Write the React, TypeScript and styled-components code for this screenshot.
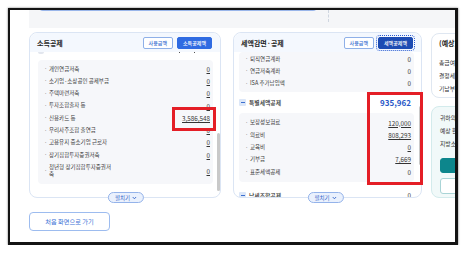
import React from "react";
import styled, { createGlobalStyle } from "styled-components";

const GlobalStyle = createGlobalStyle`
  html, body { margin: 0; padding: 0; background: #fff; }
  body { font-family: "Noto Sans CJK KR", "Noto Sans", sans-serif; }
  * { box-sizing: border-box; }
`;

const Frame = styled.div`
  position: relative;
  margin: 8px 0 0 8px;
  width: 450px;
  height: 237px;
  border: 2px solid #141414;
  border-right-width: 3px;
  border-bottom-width: 3px;
  box-shadow: 0 0 2px rgba(0, 0, 0, 0.55);
  overflow: hidden;
  background: #fff;
`;

const TopStrip = styled.div`
  display: flex;
  align-items: flex-start;
  margin-left: 19px;
  height: 18px;
  background: #f5f6f8;
`;

const TopBox = styled.div`
  margin: -4px 0 0 9px;
  width: 280px;
  height: 5px;
  background: #fff;
  border: 1px solid #9ab6ea;
  border-radius: 0 0 6px 6px;
`;

const DashedDivider = styled.div`
  margin-left: 10px;
  height: 12px;
  border-left: 1px dashed #cfd6e0;
`;

const CardsRow = styled.div`
  display: flex;
  align-items: flex-start;
  margin: 4px 0 0 19px;
`;

const Card = styled.div<{ $w: number; $mr: number }>`
  position: relative;
  display: flex;
  flex-direction: column;
  flex: none;
  width: ${(p) => p.$w}px;
  height: 166px;
  margin-right: ${(p) => p.$mr}px;
  border: 1px solid #dbe5f4;
  border-radius: 8px;
  background: #fff;
`;

const CardHeader = styled.div`
  display: flex;
  align-items: center;
  justify-content: space-between;
  height: 19px;
  padding: 0 8px 0 7px;
  background: #f4f8fe;
  border-radius: 8px 8px 0 0;
`;

const CardTitle = styled.span`
  font-size: 7px;
  font-weight: 700;
  color: #1f1f1f;
  white-space: nowrap;
`;

const HeaderButtons = styled.div`
  display: flex;
  gap: 4px;
`;

const TabButton = styled.span<{ $active?: boolean; $focus?: boolean }>`
  display: flex;
  align-items: center;
  justify-content: center;
  height: 12px;
  padding: 0 5px;
  font-size: 5px;
  font-weight: 500;
  border-radius: 2px;
  white-space: nowrap;
  border: 1px solid ${(p) => (p.$active ? (p.$focus ? "#1d4cb3" : "#2f6be2") : "#8fb0e8")};
  background: ${(p) => (p.$active ? (p.$focus ? "#1d4cb3" : "#2f6be2") : "#fff")};
  color: ${(p) => (p.$active ? "#fff" : "#3b6fd0")};
  outline: ${(p) => (p.$focus ? "1px dotted #2a5bd0" : "none")};
  outline-offset: 1px;
`;

const CardBody = styled.div<{ $pl: number }>`
  position: relative;
  flex: 1;
  overflow: hidden;
  padding: 0 7px 0 ${(p) => p.$pl}px;
`;

const PeekRow = styled.div`
  display: flex;
  justify-content: space-between;
  align-items: flex-start;
  height: 8px;
  padding: 0 18px 0 0;
`;

const PeekStub = styled.span`
  width: 6px;
  height: 2px;
  border-radius: 0 0 2px 2px;
  background: #e2e6ee;
`;

const PeekDots = styled.span`
  display: flex;
  gap: 14px;
  & > i {
    width: 1px;
    height: 1px;
    background: #555;
  }
`;

const Panel = styled.div<{ $pt: number; $pb: number }>`
  padding: ${(p) => p.$pt}px 3px ${(p) => p.$pb}px 6px;
  background: #f6f7fa;
  border-radius: 4px;
`;

const Row = styled.div<{ $tall?: boolean }>`
  display: flex;
  align-items: center;
  height: ${(p) => (p.$tall ? 20 : 12.3)}px;
`;

const Bullet = styled.span`
  flex: none;
  width: 5px;
  font-size: 6px;
  color: #666;
  line-height: 1;
`;

const Label = styled.span<{ $wrap?: boolean }>`
  display: block;
  flex: none;
  width: ${(p) => (p.$wrap ? "64px" : "auto")};
  font-size: 5.5px;
  line-height: 7.2px;
  color: #3a3a3a;
  white-space: ${(p) => (p.$wrap ? "normal" : "nowrap")};
  word-break: break-all;
`;

const Spacer = styled.span`
  flex: 1;
`;

const Value = styled.span<{ $link?: boolean }>`
  font-size: 6.3px;
  color: #333;
  white-space: nowrap;
  text-decoration: ${(p) => (p.$link ? "underline" : "none")};
  text-underline-offset: 1px;
`;

const SectionRow = styled.div<{ $mt?: number }>`
  display: flex;
  align-items: center;
  height: 21px;
  margin-top: ${(p) => p.$mt ?? 0}px;
  padding-right: 3px;
`;

const ToggleBox = styled.span`
  display: flex;
  align-items: center;
  justify-content: center;
  width: 7px;
  height: 7px;
  margin-right: 3px;
  border-radius: 1px;
  background: #dce7f8;
  &::before {
    content: "";
    width: 4px;
    height: 1px;
    background: #3b6fd0;
  }
`;

const SectionLabel = styled.span`
  font-size: 5.8px;
  font-weight: 500;
  color: #2b2b2b;
`;

const SectionValue = styled.span`
  font-size: 8px;
  font-weight: 700;
  color: #2856c8;
`;

const ScrollThumb = styled.span<{ $left: number; $top: number; $h: number }>`
  position: absolute;
  left: ${(p) => p.$left}px;
  top: ${(p) => p.$top}px;
  width: 2.5px;
  height: ${(p) => p.$h}px;
  border-radius: 2px;
  background: #c9c9c9;
`;

const ExpandPill = styled.span<{ $shift: number }>`
  position: absolute;
  left: calc(50% + ${(p) => p.$shift}px);
  bottom: -6px;
  transform: translateX(-50%);
  display: flex;
  align-items: center;
  gap: 2px;
  height: 11px;
  padding: 0 6px;
  border: 1px solid #94b3ea;
  border-radius: 6px;
  background: #eaf1fd;
  font-size: 5.5px;
  color: #3566c8;
  white-space: nowrap;
`;

const SideColumn = styled.div`
  display: flex;
  flex-direction: column;
  flex: none;
  width: 160px;
  margin-top: 1px;
`;

const SideBox = styled.div<{ $tint?: boolean; $h: number }>`
  height: ${(p) => p.$h}px;
  padding: ${(p) => (p.$tint ? "5px 0 0 8px" : "4px 0 0 7px")};
  border: 1px solid ${(p) => (p.$tint ? "#d3ebec" : "#dfe7f1")};
  border-radius: 8px;
  background: ${(p) => (p.$tint ? "#f1f9f9" : "#fff")};
  & + & {
    margin-top: 8px;
  }
`;

const SideTitle = styled.div`
  height: 10px;
  font-size: 7px;
  font-weight: 700;
  line-height: 10px;
  color: #1f1f1f;
  white-space: nowrap;
  margin-bottom: 9px;
`;

const SideLine = styled.div`
  height: 12.8px;
  font-size: 5.8px;
  line-height: 12.8px;
  color: #333;
  white-space: nowrap;
`;

const SideButton = styled.div<{ $solid?: boolean }>`
  height: ${(p) => (p.$solid ? 15 : 16)}px;
  margin-top: ${(p) => (p.$solid ? 8 : 5)}px;
  border-radius: 3px;
  border: 1px solid ${(p) => (p.$solid ? "#0d868c" : "#a9d4d6")};
  background: ${(p) => (p.$solid ? "#0d868c" : "#fff")};
`;

const HomeButton = styled.div`
  display: flex;
  align-items: center;
  justify-content: center;
  width: 81px;
  height: 19px;
  margin: 14px 0 0 19px;
  border: 1px solid #9dbcef;
  border-radius: 4px;
  background: #fff;
  font-size: 6.2px;
  color: #3d72d6;
`;

const RedMark = styled.span<{ $x: number; $y: number; $w: number; $h: number }>`
  position: absolute;
  left: ${(p) => p.$x}px;
  top: ${(p) => p.$y}px;
  width: ${(p) => p.$w}px;
  height: ${(p) => p.$h}px;
  border: 3px solid #e41e26;
`;

const Chevron = () => (
  <svg width="5" height="4" viewBox="0 0 5 4">
    <polyline points="0.8,1 2.5,2.8 4.2,1" fill="none" stroke="#3566c8" strokeWidth="0.9" />
  </svg>
);

type Item = { label: string; value: string; link?: boolean; tall?: boolean };

const incomeItems: Item[] = [
  { label: "개인연금저축", value: "0", link: true },
  { label: "소기업·소상공인 공제부금", value: "0", link: true },
  { label: "주택마련저축", value: "0", link: true },
  { label: "투자조합출자 등", value: "0", link: true },
  { label: "신용카드 등", value: "3,586,548", link: true },
  { label: "우리사주조합 출연금", value: "0", link: true },
  { label: "고용유지 중소기업 근로자", value: "0", link: true },
  { label: "장기집합투자증권저축", value: "0", link: true },
  { label: "청년형 장기집합투자증권저축", value: "0", link: true, tall: true },
];

const pensionItems: Item[] = [
  { label: "퇴직연금계좌", value: "0" },
  { label: "연금저축계좌", value: "0" },
  { label: "ISA 추가납입액", value: "0" },
];

const specialItems: Item[] = [
  { label: "보장성보험료", value: "120,000", link: true },
  { label: "의료비", value: "808,293", link: true },
  { label: "교육비", value: "0", link: true },
  { label: "기부금", value: "7,669", link: true },
  { label: "표준세액공제", value: "0" },
];

const ItemRows = ({ items }: { items: Item[] }) => (
  <>
    {items.map((it) => (
      <Row key={it.label} $tall={it.tall}>
        <Bullet>·</Bullet>
        <Label $wrap={it.tall}>{it.label}</Label>
        <Spacer />
        <Value $link={it.link}>{it.value}</Value>
      </Row>
    ))}
  </>
);

export default function App() {
  return (
    <>
      <GlobalStyle />
      <Frame>
        <TopStrip>
          <TopBox />
          <DashedDivider />
        </TopStrip>

        <CardsRow>
          <Card $w={192} $mr={12}>
            <CardHeader>
              <CardTitle>소득공제</CardTitle>
              <HeaderButtons>
                <TabButton>사용금액</TabButton>
                <TabButton $active>소득공제액</TabButton>
              </HeaderButtons>
            </CardHeader>
            <CardBody $pl={8}>
              <PeekRow>
                <PeekStub />
                <PeekDots>
                  <i />
                  <i />
                </PeekDots>
              </PeekRow>
              <Panel $pt={3} $pb={3}>
                <ItemRows items={incomeItems} />
              </Panel>
              <ScrollThumb $left={187} $top={81} $h={58} />
            </CardBody>
            <ExpandPill $shift={1}>
              펼치기 <Chevron />
            </ExpandPill>
          </Card>

          <Card $w={189} $mr={9}>
            <CardHeader>
              <CardTitle>세액감면·공제</CardTitle>
              <HeaderButtons>
                <TabButton>사용금액</TabButton>
                <TabButton $active $focus>
                  세액공제액
                </TabButton>
              </HeaderButtons>
            </CardHeader>
            <CardBody $pl={5}>
              <Panel $pt={1} $pb={2}>
                <ItemRows items={pensionItems} />
              </Panel>
              <SectionRow>
                <ToggleBox />
                <SectionLabel>특별세액공제</SectionLabel>
                <Spacer />
                <SectionValue>935,962</SectionValue>
              </SectionRow>
              <Panel $pt={4} $pb={4}>
                <ItemRows items={specialItems} />
              </Panel>
              <SectionRow $mt={3}>
                <ToggleBox />
                <SectionLabel>납세조합공제</SectionLabel>
                <Spacer />
                <Value>0</Value>
              </SectionRow>
              <ScrollThumb $left={185} $top={54} $h={59} />
            </CardBody>
            <ExpandPill $shift={-2}>
              펼치기 <Chevron />
            </ExpandPill>
          </Card>

          <SideColumn>
            <SideBox $h={65}>
              <SideTitle>(예상) 연말정산 결과</SideTitle>
              <SideLine>총급여액</SideLine>
              <SideLine>결정세액</SideLine>
              <SideLine>기납부세액</SideLine>
            </SideBox>
            <SideBox $tint $h={92}>
              <SideLine>귀하의 연말정산</SideLine>
              <SideLine>예상 환급세액은</SideLine>
              <SideLine>지방소득세 포함</SideLine>
              <SideButton $solid />
              <SideButton />
            </SideBox>
          </SideColumn>
        </CardsRow>

        <HomeButton>처음 화면으로 가기</HomeButton>

        <RedMark $x={162} $y={97} $w={44} $h={24} />
        <RedMark $x={357} $y={82} $w={56} $h={93} />
      </Frame>
    </>
  );
}
